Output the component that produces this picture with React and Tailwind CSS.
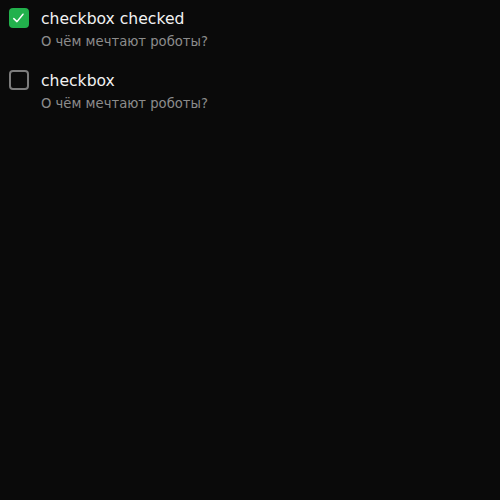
import React, { useState } from 'react';

const CheckboxItem = ({ label, hint, checked, onToggle }) => (
  <label className="flex gap-3 cursor-pointer select-none" onClick={onToggle}>
    <span
      className={
        checked
          ? 'flex-shrink-0 w-5 h-5 rounded-[4px] bg-[#22b14c] flex items-center justify-center'
          : 'flex-shrink-0 w-5 h-5 rounded-[4px] border-2 border-[#7c7c7c]'
      }
    >
      {checked && (
        <svg className="w-3.5 h-3.5 text-white" viewBox="0 0 14 14" fill="none">
          <path d="M1.8 7.6l3.2 3L11 3.2" stroke="currentColor" strokeWidth="1.5" strokeLinecap="round" strokeLinejoin="round" />
        </svg>
      )}
    </span>
    <div className="flex flex-col">
      <span className="text-[15.6px] leading-[22px] text-[#f2f2f2]">{label}</span>
      <span className="mt-[2px] text-[13.2px] leading-5 text-[#8c8c8c]">{hint}</span>
    </div>
  </label>
);

const App = () => {
  const [items, setItems] = useState([
    { label: 'checkbox checked', checked: true },
    { label: 'checkbox', checked: false },
  ]);

  const toggle = (i) =>
    setItems(items.map((it, idx) => (idx === i ? { ...it, checked: !it.checked } : it)));

  return (
    <div className="min-h-[500px] bg-[#0a0a0a] pl-[9px] pt-2 font-['DejaVu_Sans',sans-serif]">
      <div className="flex flex-col gap-[18px]">
        {items.map((it, i) => (
          <CheckboxItem
            key={i}
            label={it.label}
            hint="О чём мечтают роботы?"
            checked={it.checked}
            onToggle={() => toggle(i)}
          />
        ))}
      </div>
    </div>
  );
};

export default App;
